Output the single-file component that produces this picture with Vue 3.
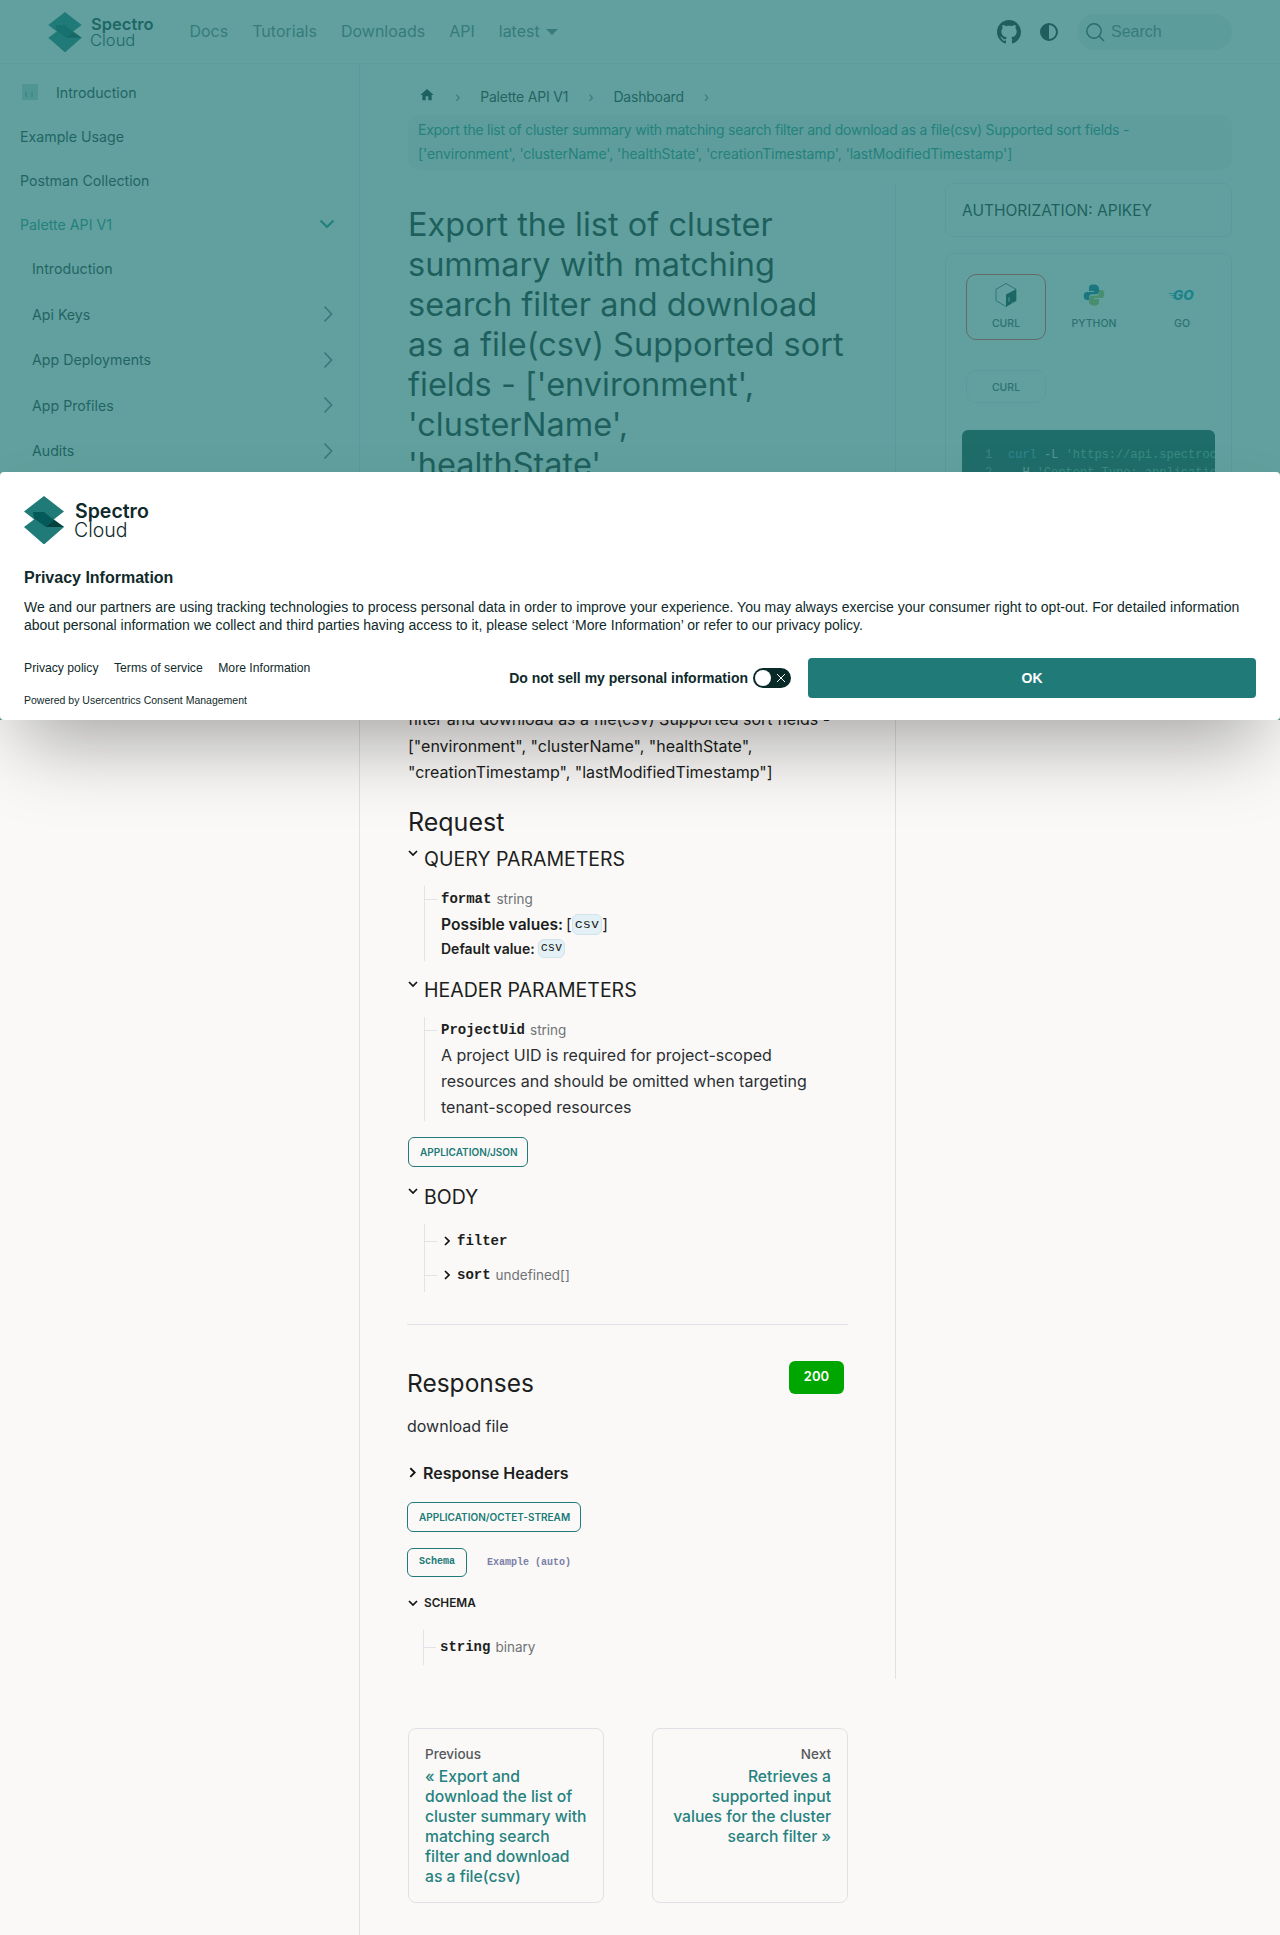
<template>
  <div class="page">
    <header class="navbar">
      <div class="brand">
        <svg class="brand-mark" viewBox="0 0 40 48"><use href="#sc-logo" /></svg>
        <div class="brand-name"><b>Spectro</b><span>Cloud</span></div>
      </div>
      <nav class="nav-links">
        <a v-for="link in navLinks" :key="link">{{ link }}</a>
        <a class="version">latest<i class="caret"></i></a>
      </nav>
      <div class="nav-right">
        <svg class="github" viewBox="0 0 16 16" width="24" height="24"><path fill="#1b1f23" d="M8 0C3.58 0 0 3.58 0 8c0 3.54 2.29 6.53 5.47 7.59.4.07.55-.17.55-.38 0-.19-.01-.82-.01-1.49-2.01.37-2.53-.49-2.69-.94-.09-.23-.48-.94-.82-1.13-.28-.15-.68-.52-.01-.53.63-.01 1.08.58 1.23.82.72 1.21 1.87.87 2.33.66.07-.52.28-.87.51-1.07-1.78-.2-3.64-.89-3.64-3.95 0-.87.31-1.59.82-2.15-.08-.2-.36-1.02.08-2.12 0 0 .67-.21 2.2.82.64-.18 1.32-.27 2-.27.68 0 1.36.09 2 .27 1.53-1.04 2.2-.82 2.2-.82.44 1.1.16 1.92.08 2.12.51.56.82 1.27.82 2.15 0 3.07-1.87 3.75-3.65 3.95.29.25.54.73.54 1.48 0 1.07-.01 1.93-.01 2.2 0 .21.15.46.55.38A8.013 8.013 0 0016 8c0-4.42-3.58-8-8-8z" /></svg>
        <svg class="theme" viewBox="0 0 18 18" width="18" height="18"><circle cx="9" cy="9" r="8" fill="none" stroke="#1b1f23" stroke-width="2" /><path d="M9 1a8 8 0 0 0 0 16z" fill="#1b1f23" /></svg>
        <div class="search">
          <svg viewBox="0 0 20 20" width="20" height="20"><circle cx="9" cy="9" r="7.2" fill="none" stroke="#3b4a4d" stroke-width="1.4" /><path d="M14.2 14.2 19 19" stroke="#3b4a4d" stroke-width="1.4" /></svg>
          <span>Search</span>
        </div>
      </div>
    </header>

    <div class="layout">
      <aside class="sidebar">
        <div class="side-row top-intro"><i class="side-icon"><em></em><em></em></i>Introduction</div>
        <div class="side-row">Example Usage</div>
        <div class="side-row">Postman Collection</div>
        <div class="side-row active">
          Palette API V1
          <svg viewBox="0 0 16 10" width="16" height="10"><path d="M1.5 1.5 8 8l6.5-6.5" fill="none" stroke="#2a8d89" stroke-width="2.2" /></svg>
        </div>
        <div v-for="item in sideItems" :key="item.label" class="side-row sub">
          {{ item.label }}
          <svg v-if="item.more" viewBox="0 0 10 18" width="10" height="18"><path d="M1.5 1.5 8.500 9l-7 7.500" fill="none" stroke="#6f7c80" stroke-width="1.8" /></svg>
        </div>
      </aside>

      <main class="content">
        <div class="crumbs">
          <svg viewBox="0 0 24 24" width="16" height="16"><path fill="#1a2a2a" d="M10 20v-6h4v6h5v-8h3L12 3 2 12h3v8z" /></svg>
          <i>›</i><span>Palette API V1</span><i>›</i><span>Dashboard</span><i>›</i>
        </div>
        <div class="summary">
          <span class="s1">Export the list of cluster summary with matching search filter and download as a file(csv) Supported sort fields -</span>
          <span class="s2">['environment', 'clusterName', 'healthState', 'creationTimestamp', 'lastModifiedTimestamp']</span>
        </div>

        <div class="doc-row">
          <article class="doc">
            <h1>Export the list of cluster<br />summary with matching<br />search filter and download<br />as a file(csv) Supported sort<br />fields - ['environment',<br />'clusterName',<br />'healthState',<br />'creationTimestamp',<br />'lastModifiedTimestamp']</h1>
            <p class="lead">
              Export the list of cluster summary with matching search<br />
              filter and download as a file(csv) Supported sort fields -<br />
              ["environment", "clusterName", "healthState",<br />
              "creationTimestamp", "lastModifiedTimestamp"]
            </p>

            <h2 class="request">Request</h2>
            <h3 class="group"><svg viewBox="0 0 10 6" width="10" height="6"><path d="M1 1l4 4 4-4" /></svg>QUERY PARAMETERS</h3>
            <div class="tree q">
              <div class="leaf name-row"><code class="pname">format</code><span class="ptype">string</span></div>
              <div class="possible">Possible values: <span class="brk">[<code class="chip">csv</code>]</span></div>
              <div class="default">Default value: <code class="chip small">csv</code></div>
            </div>

            <h3 class="group header"><svg viewBox="0 0 10 6" width="10" height="6"><path d="M1 1l4 4 4-4" /></svg>HEADER PARAMETERS</h3>
            <div class="tree h">
              <div class="leaf name-row"><code class="pname">ProjectUid</code><span class="ptype">string</span></div>
              <div class="pdesc">A project UID is required for project-scoped<br />resources and should be omitted when targeting<br />tenant-scoped resources</div>
            </div>

            <div class="mime json">APPLICATION/JSON</div>

            <h3 class="group body"><svg viewBox="0 0 10 6" width="10" height="6"><path d="M1 1l4 4 4-4" /></svg>BODY</h3>
            <div class="tree b">
              <div class="leaf fold"><svg viewBox="0 0 6 10" width="6" height="10"><path d="M1 1l4 4-4 4" /></svg><code class="pname">filter</code></div>
              <div class="leaf fold"><svg viewBox="0 0 6 10" width="6" height="10"><path d="M1 1l4 4-4 4" /></svg><code class="pname">sort</code><span class="ptype">undefined[]</span></div>
            </div>

            <div class="responses">
              <hr />
              <div class="resp-head">
                <h2>Responses</h2>
                <span class="status">200</span>
              </div>
              <p class="resp-text">download file</p>
              <div class="resp-headers"><svg viewBox="0 0 6 10" width="7" height="11"><path d="M1 1l4 4-4 4" /></svg>Response Headers</div>
              <div class="mime octet">APPLICATION/OCTET-STREAM</div>
              <div class="schema-tabs">
                <span class="schema-tab">Schema</span>
                <span class="example-tab">Example (auto)</span>
              </div>
              <div class="schema-title"><svg viewBox="0 0 10 6" width="10" height="6"><path d="M1 1l4 4 4-4" /></svg>SCHEMA</div>
              <div class="tree s">
                <div class="leaf name-row"><code class="pname">string</code><span class="ptype">binary</span></div>
              </div>
            </div>
          </article>

          <aside class="panel">
            <div class="auth-card">AUTHORIZATION: APIKEY</div>
            <div class="code-card">
              <div class="lang-tabs">
                <div class="lang selected">
                  <svg viewBox="0 0 22 24" width="22" height="24"><path d="M11 .5 21 6.300v11.400L11 23.500 1 17.700V6.300z" fill="none" stroke="#1f4f55" stroke-width=".8" /><path d="M21 6.300v11.400L11 23.500V11.500z" fill="#0e3a3d" /><path d="M14 14.500v4M13 18c1.500.5 2-.3 1.500-1s-1.500-1-1-1.700 1.200-.3 1.400 0M16.500 19.500h2" stroke="#b8d8d6" stroke-width=".7" fill="none" /></svg>
                  <span>CURL</span>
                </div>
                <div class="lang">
                  <svg viewBox="0 0 24 24" width="24" height="24"><path fill="#0f6f8f" d="M12 1.500C7 1.500 7 3.500 7 5.500V8h5.200v1H5C3 9 1.700 10.500 1.700 13S3 17 5 17h2v-2.800c0-2 1.500-3 3-3h4c1.700 0 3-1.200 3-3V5.500c0-2-1.700-4-5-4z" /><path fill="#a8b85c" d="M12 22.500c5 0 5-2 5-4V16h-5.200v-1H19c2 0 3.300-1.500 3.300-4S21 7 19 7h-2v2.800c0 2-1.500 3-3 3h-4c-1.700 0-3 1.200-3 3v2.700c0 2 1.700 4 5 4z" /></svg>
                  <span>PYTHON</span>
                </div>
                <div class="lang">
                  <svg viewBox="0 0 26 24" width="26" height="24"><path d="M0 10.500h6M1.500 12.500h5M3 14.500h3" stroke="#0a94b8" stroke-width=".7" /><text x="4" y="17" class="go-mark">GO</text></svg>
                  <span>GO</span>
                </div>
              </div>
              <div class="variant">CURL</div>
              <div class="code">
                <div><i>1</i><b>curl</b> -L <em>'https://api.spectrocloud.com/v1/dashboard/spectroclusters/search/export'</em></div>
                <div><i>2</i> -H <em>'Content-Type: application/json'</em></div>
              </div>
            </div>
          </aside>
        </div>

        <div class="pager">
          <a class="pager-card">
            <small>Previous</small>
            <span>« Export and<br />download the list of<br />cluster summary with<br />matching search<br />filter and download<br />as a file(csv)</span>
          </a>
          <a class="pager-card next">
            <small>Next</small>
            <span>Retrieves a<br />supported input<br />values for the cluster<br />search filter »</span>
          </a>
        </div>
      </main>
    </div>

    <div class="overlay"></div>

    <section class="consent">
      <div class="consent-logo">
        <svg viewBox="0 0 40 48" width="40" height="48">
          <g id="sc-logo">
            <path d="M20 0 40 15.500 20 31 0 15.500z" fill="#207a78" />
            <path d="M0 31 20 16 40 31 20 48.500z" fill="#207a78" />
            <path d="M9 16h11L30 24l-8 7-12-8.500z" fill="#045a58" />
            <path d="M22 31l8-7 10 7z" fill="#053f3e" />
          </g>
        </svg>
        <div class="consent-name"><b>Spectro</b><span>Cloud</span></div>
      </div>
      <h4>Privacy Information</h4>
      <p>We and our partners are using tracking technologies to process personal data in order to improve your experience. You may always exercise your consumer right to opt-out. For detailed information about personal information we collect and third parties having access to it, please select ‘More Information’ or refer to our privacy policy.</p>
      <div class="consent-foot">
        <div class="consent-links">
          <div class="links-row"><a>Privacy policy</a><a>Terms of service</a><a>More Information</a></div>
          <div class="powered">Powered by Usercentrics Consent Management</div>
        </div>
        <div class="consent-actions">
          <span class="dns">Do not sell my personal information</span>
          <span class="toggle"><i></i><svg viewBox="0 0 10 10" width="10" height="10"><path d="M1 1l8 8M9 1l-8 8" stroke="#fff" stroke-width="1" /></svg></span>
          <button class="ok">OK</button>
        </div>
      </div>
    </section>
  </div>
</template>

<script setup>
const navLinks = ['Docs', 'Tutorials', 'Downloads', 'API']

const sideItems = [
  { label: 'Introduction', more: false },
  { label: 'Api Keys', more: true },
  { label: 'App Deployments', more: true },
  { label: 'App Profiles', more: true },
  { label: 'Audits', more: true },
]
</script>

<style>
html, body {
  margin: 0;
  background: #faf9f7;
}
</style>

<style scoped>
.page {
  position: relative;
  height: 1935px;
  overflow: hidden;
  background: #faf9f7;
  color: #1c1e21;
  font-family: Inter, "Liberation Sans", sans-serif;
}
.navbar {
  height: 64px;
  box-sizing: border-box;
  display: flex;
  align-items: center;
  padding: 0 48px;
  border-bottom: 1px solid #ecebe9;
}
.brand {
  display: flex;
  align-items: center;
  gap: 9px;
}
.brand-mark {
  width: 34px;
  height: 40px;
}
.brand-name {
  display: flex;
  flex-direction: column;
  font-size: 16.500px;
  line-height: 16px;
  color: #1c3a3a;
}
.brand-name b {
  font-weight: 600;
}
.brand-name span {
  font-weight: 300;
  margin-left: -1px;
}
.nav-links {
  display: flex;
  align-items: center;
  gap: 24px;
  margin: 0 0 2px 36px;
  font-size: 16px;
  color: #6f7c80;
}
.version {
  display: flex;
  align-items: center;
  gap: 6px;
}
.caret {
  width: 0;
  height: 0;
  margin-top: 2px;
  border: 6px solid transparent;
  border-top: 6px solid #6f7c80;
  border-bottom: 0;
}
.nav-right {
  margin-left: auto;
  display: flex;
  align-items: center;
}
.github {
  margin-right: 19px;
}
.theme {
  margin-right: 19px;
}
.search {
  width: 155px;
  height: 36px;
  box-sizing: border-box;
  padding-left: 8px;
  border-radius: 18px;
  background: #ebeaea;
  display: flex;
  align-items: center;
  gap: 6px;
  font-family: "Liberation Sans", sans-serif;
  font-size: 16px;
  color: #6f7c80;
}

.layout {
  display: flex;
}
.sidebar {
  width: 360px;
  flex: none;
  box-sizing: border-box;
  padding-top: 6px;
  border-right: 1px solid #dfe1e6;
}
.side-row {
  height: 44px;
  display: flex;
  align-items: center;
  justify-content: space-between;
  padding: 0 22px 0 20px;
  font-size: 14.200px;
  color: #2b2f33;
}
.side-row.top-intro {
  justify-content: flex-start;
  padding-left: 22px;
  gap: 18px;
}
.side-icon {
  width: 16px;
  height: 16px;
  box-sizing: border-box;
  padding: 8px 3px 3px;
  display: flex;
  gap: 4px;
  border-radius: 1px;
  background: #c6d4d3;
}
.side-icon em {
  width: 2px;
  background: #8fb3b1;
}
.side-row.active {
  color: #2f8f8b;
  padding-right: 24px;
}
.side-row.sub {
  height: 45.500px;
  padding-left: 32px;
  padding-right: 26px;
}

.content {
  flex: 1;
  padding: 0 48px 32px;
}
.crumbs {
  height: 51px;
  box-sizing: border-box;
  padding: 22px 0 0 11px;
  display: flex;
  align-items: flex-start;
  font-size: 14px;
  line-height: 22px;
  letter-spacing: -0.2px;
  color: #2b2f33;
}
.crumbs i {
  font-style: normal;
  margin: 0 20px;
  color: #6f7c80;
}
.crumbs svg {
  margin-top: 1px;
}
.summary {
  height: 55px;
  box-sizing: border-box;
  padding: 3px 10px;
  background: #f0efed;
  border-radius: 10px;
  font-size: 14px;
  line-height: 24px;
  color: #2f8f8b;
  white-space: nowrap;
}
.s1,
.s2 {
  display: block;
}
.s1 {
  letter-spacing: -0.265px;
}
.s2 {
  letter-spacing: -0.075px;
}
.doc-row {
  display: flex;
  margin-top: 13px;
}
.doc {
  width: 488px;
  box-sizing: border-box;
  padding: 22px 47px 14px 0;
  border-right: 1px solid #dfe1e6;
}
h1 {
  margin: 0;
  font-size: 32.500px;
  line-height: 40px;
  font-weight: 400;
  white-space: nowrap;
  color: #1c1e21;
}
.lead {
  margin: 115px 0 0;
  font-size: 16px;
  line-height: 26.400px;
  white-space: nowrap;
}
.request {
  margin: 20px 0 0;
  font-size: 25px;
  line-height: 32px;
  font-weight: 400;
}
.group {
  position: relative;
  margin: 7px 0 0;
  padding-left: 16px;
  font-size: 19.500px;
  line-height: 28px;
  font-weight: 400;
  white-space: nowrap;
}
.group svg {
  position: absolute;
  left: 0;
  top: 5px;
}
.group svg path,
.fold svg path,
.resp-headers svg path,
.schema-title svg path {
  fill: none;
  stroke: #111;
  stroke-width: 1.700;
}
.group.header {
  margin-top: 15px;
}
.group.body {
  margin-top: 16px;
}
.tree {
  margin: 13px 0 0 16px;
  padding-left: 16px;
  border-left: 1px solid #dfe3ea;
}
.tree.s {
  margin-top: 17px;
}
.leaf {
  position: relative;
}
.leaf::before {
  content: "";
  position: absolute;
  left: -16px;
  top: 50%;
  width: 12px;
  height: 1px;
  background: #dfe3ea;
}
.name-row {
  height: 26px;
  display: flex;
  align-items: center;
}
.tree.q .name-row {
  height: 27px;
}
.pname {
  font-family: "Liberation Mono", monospace;
  font-size: 14px;
  font-weight: 700;
  color: #1c1e21;
}
.ptype {
  margin-left: 5px;
  font-size: 13.500px;
  color: #6f7276;
}
.possible {
  height: 24px;
  display: flex;
  align-items: center;
  gap: 3px;
  font-size: 15.600px;
  font-weight: 600;
}
.brk {
  font-weight: 400;
  display: flex;
  align-items: center;
}
.default {
  height: 24px;
  display: flex;
  align-items: center;
  gap: 3px;
  font-size: 14px;
  font-weight: 600;
}
.chip {
  padding: 0 2px;
  height: 21px;
  line-height: 19px;
  box-sizing: border-box;
  font-family: "Liberation Mono", monospace;
  font-size: 13.600px;
  font-weight: 400;
  background: #e3f0f5;
  border: 1px solid #d3e3ea;
  border-radius: 6px;
}
.chip.small {
  font-size: 12px;
  height: 19px;
  line-height: 17px;
}
.pdesc {
  margin-top: -1px;
  font-size: 16px;
  line-height: 26.400px;
  white-space: nowrap;
  color: #2b2f33;
}
.mime {
  display: block;
  height: 30px;
  box-sizing: border-box;
  padding: 0 11px;
  border: 1px solid #207a78;
  border-radius: 6px;
  font-size: 10px;
  line-height: 28px;
  font-weight: 600;
  color: #207a78;
  white-space: nowrap;
}
.mime.json {
  margin-top: 16px;
  width: 120px;
}
.fold {
  height: 34px;
  display: flex;
  align-items: center;
  padding-left: 3px;
}
.fold svg {
  margin-right: 7px;
}
.responses {
  margin-left: -1px;
}
hr {
  border: 0;
  height: 1px;
  background: #dfe1e6;
  margin: 32px 0 0;
}
.resp-head {
  display: flex;
  justify-content: space-between;
  align-items: flex-start;
  margin-top: 36px;
}
.resp-head h2 {
  margin: 6px 0 0;
  font-size: 24.500px;
  line-height: 32px;
  font-weight: 400;
}
.status {
  width: 55px;
  height: 33px;
  margin-right: 4px;
  border-radius: 6px;
  background: #00a600;
  color: #fff;
  font-size: 13px;
  font-weight: 600;
  line-height: 31px;
  text-align: center;
}
.resp-text {
  margin: 14px 0 0;
  font-size: 16px;
  line-height: 26px;
  color: #2b2f33;
}
.resp-headers {
  margin-top: 22px;
  display: flex;
  align-items: center;
  gap: 7px;
  padding-left: 2px;
  font-size: 16px;
  line-height: 24px;
  font-weight: 600;
}
.mime.octet {
  margin-top: 17px;
  width: 174px;
}
.schema-tabs {
  margin-top: 16px;
  display: flex;
  align-items: center;
  gap: 20px;
  font-family: "Liberation Mono", monospace;
  font-size: 10px;
  font-weight: 700;
}
.schema-tab {
  width: 60px;
  height: 29px;
  box-sizing: border-box;
  border: 1px solid #207a78;
  border-radius: 6px;
  text-align: center;
  line-height: 25px;
  color: #207a78;
}
.example-tab {
  color: #7a7fa8;
}
.schema-title {
  margin-top: 16px;
  display: flex;
  align-items: center;
  gap: 6px;
  padding-left: 1px;
  font-size: 11.800px;
  line-height: 20px;
  font-weight: 600;
}
.tree.s .name-row {
  height: 35px;
}

.panel {
  width: 287px;
  margin-left: 49px;
}
.auth-card,
.code-card {
  box-sizing: border-box;
  border: 1px solid #e3e5ea;
  border-radius: 8px;
}
.auth-card {
  height: 54px;
  padding: 0 16px;
  line-height: 54px;
  font-size: 15.500px;
  color: #1c1e21;
  white-space: nowrap;
}
.code-card {
  margin-top: 16px;
  height: 440px;
  padding: 20px 16px;
}
.lang-tabs {
  display: flex;
  gap: 8px;
  padding-left: 4px;
}
.lang {
  flex: none;
  width: 80px;
  height: 66px;
  box-sizing: border-box;
  display: flex;
  flex-direction: column;
  align-items: center;
  padding-top: 8px;
  font-size: 10.500px;
  font-weight: 500;
  color: #4a5a5f;
  gap: 10px;
  border: 1px solid transparent;
  border-radius: 10px;
}
.lang.selected {
  border-color: #ff4040;
}
.go-mark {
  font: italic 800 13.500px Inter, sans-serif;
  fill: #0a94b8;
}
.variant {
  width: 80px;
  height: 33px;
  margin: 30px 0 0 4px;
  box-sizing: border-box;
  border: 1px solid #e3e5ea;
  border-radius: 10px;
  text-align: center;
  font-size: 10.500px;
  font-weight: 500;
  line-height: 33px;
  color: #4a5a5f;
}
.code {
  margin-top: 27px;
  height: 260px;
  width: 253px;
  box-sizing: border-box;
  padding: 16px 0 0 23px;
  overflow: hidden;
  border-radius: 6px;
  background: #1f4f4e;
  font-family: "Liberation Mono", monospace;
  font-size: 12px;
  line-height: 18px;
  color: #c9d3d3;
  white-space: nowrap;
}
.code i {
  display: inline-block;
  width: 23px;
  font-style: normal;
  color: #7f9c9b;
}
.code b {
  font-weight: 400;
  color: #4ba3c7;
}
.code em {
  font-style: normal;
  color: #6fb59a;
}

.pager {
  display: flex;
  gap: 48px;
  margin-top: 49px;
  width: 440px;
}
.pager-card {
  width: 196px;
  height: 175px;
  box-sizing: border-box;
  padding: 15px 16px;
  border: 1px solid #dfe1e6;
  border-radius: 8px;
}
.pager-card small {
  display: block;
  font-size: 13.500px;
  line-height: 20px;
  font-weight: 500;
  color: #55585c;
  margin-bottom: 3px;
}
.pager-card span {
  display: block;
  font-size: 15.700px;
  line-height: 20px;
  font-weight: 500;
  white-space: nowrap;
  color: #26827f;
}
.pager-card.next {
  text-align: right;
}

.overlay {
  position: absolute;
  left: 0;
  right: 0;
  top: 0;
  height: 720px;
  background: rgba(32, 122, 120, .7);
}
.consent {
  position: absolute;
  left: 0;
  right: 0;
  top: 472px;
  height: 248px;
  box-sizing: border-box;
  padding: 24px;
  border-radius: 4px;
  background: #fff;
  box-shadow: 0 40px 80px -20px rgba(0, 0, 0, .35);
  font-family: "Liberation Sans", sans-serif;
  color: #0f2a2a;
}
.consent-logo {
  display: flex;
  align-items: center;
  gap: 11px;
}
.consent-name {
  display: flex;
  flex-direction: column;
  padding-top: 2px;
  font-family: Inter, sans-serif;
  font-size: 19.500px;
  line-height: 19px;
  color: #0f2a2a;
}
.consent-name b {
  font-weight: 600;
}
.consent-name span {
  font-weight: 300;
  margin-left: -1px;
}
h4 {
  margin: 24px 0 0;
  font-size: 16px;
  line-height: 20px;
  font-weight: 700;
}
.consent p {
  margin: 10px 0 0;
  font-size: 14px;
  line-height: 18px;
}
.consent-foot {
  display: flex;
  justify-content: space-between;
  align-items: flex-start;
  margin-top: 24px;
}
.links-row {
  display: flex;
  gap: 15.500px;
  font-size: 12.200px;
  line-height: 14px;
  margin-top: 3px;
}
.powered {
  margin-top: 18px;
  font-size: 10.500px;
  line-height: 14px;
}
.consent-actions {
  display: flex;
  align-items: center;
}
.dns {
  font-size: 14px;
  font-weight: 700;
}
.toggle {
  width: 38px;
  height: 20px;
  margin: 0 17px 0 5px;
  box-sizing: border-box;
  padding: 0 5px 0 2px;
  border-radius: 10px;
  background: #0a2a2a;
  display: flex;
  align-items: center;
  justify-content: space-between;
}
.toggle i {
  width: 16px;
  height: 16px;
  border-radius: 50%;
  background: #fff;
}
.ok {
  width: 448px;
  height: 40px;
  border: 0;
  border-radius: 4px;
  background: #207a78;
  color: #fff;
  font: 700 14px "Liberation Sans", sans-serif;
}
</style>
